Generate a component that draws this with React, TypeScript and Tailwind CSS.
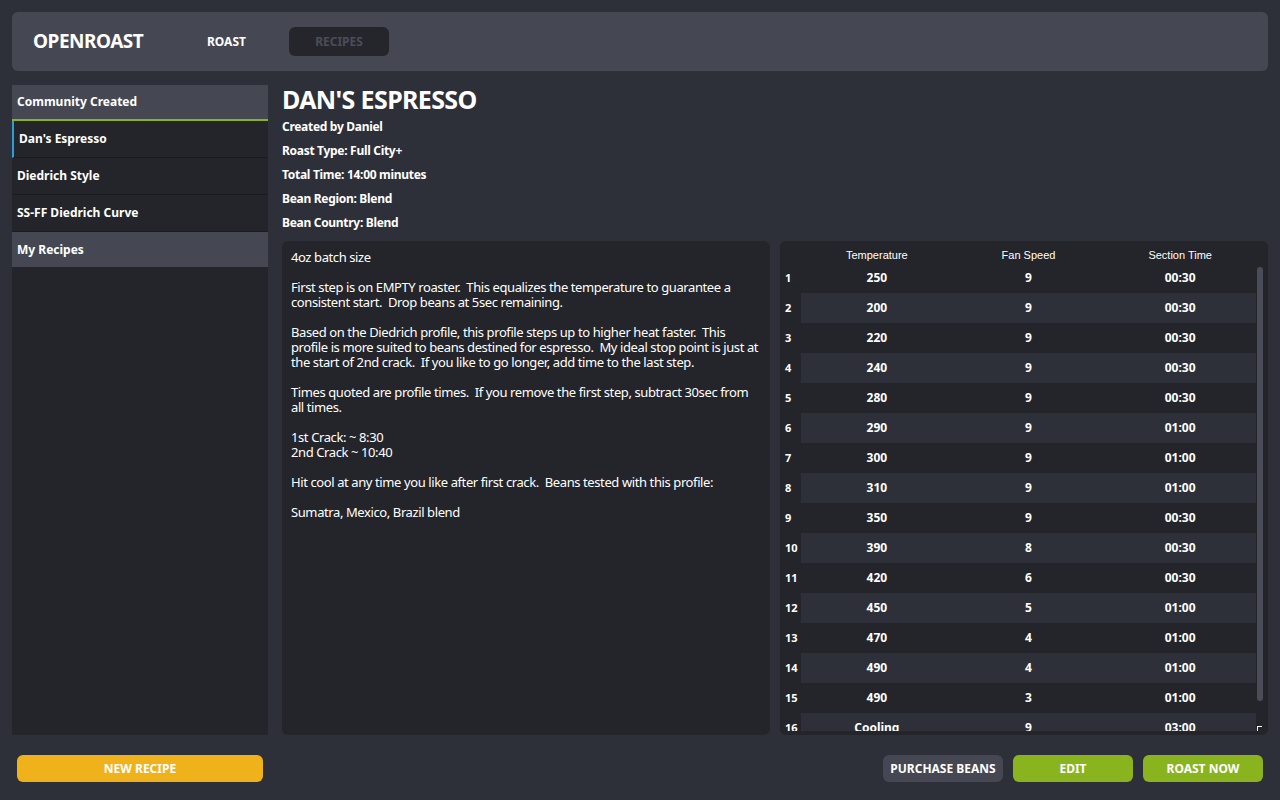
const steps = [
  { temp: '250', fan: '9', time: '00:30' },
  { temp: '200', fan: '9', time: '00:30' },
  { temp: '220', fan: '9', time: '00:30' },
  { temp: '240', fan: '9', time: '00:30' },
  { temp: '280', fan: '9', time: '00:30' },
  { temp: '290', fan: '9', time: '01:00' },
  { temp: '300', fan: '9', time: '01:00' },
  { temp: '310', fan: '9', time: '01:00' },
  { temp: '350', fan: '9', time: '00:30' },
  { temp: '390', fan: '8', time: '00:30' },
  { temp: '420', fan: '6', time: '00:30' },
  { temp: '450', fan: '5', time: '01:00' },
  { temp: '470', fan: '4', time: '01:00' },
  { temp: '490', fan: '4', time: '01:00' },
  { temp: '490', fan: '3', time: '01:00' },
  { temp: 'Cooling', fan: '9', time: '03:00' },
];

const description = `4oz batch size

First step is on EMPTY roaster.  This equalizes the temperature to guarantee a consistent start.  Drop beans at 5sec remaining.

Based on the Diedrich profile, this profile steps up to higher heat faster.  This profile is more suited to beans destined for espresso.  My ideal stop point is just at the start of 2nd crack.  If you like to go longer, add time to the last step.

Times quoted are profile times.  If you remove the first step, subtract 30sec from all times.

1st Crack: ~ 8:30
2nd Crack ~ 10:40

Hit cool at any time you like after first crack.  Beans tested with this profile:

Sumatra, Mexico, Brazil blend`;

const info = [
  'Created by Daniel',
  'Roast Type: Full City+',
  'Total Time: 14:00 minutes',
  'Bean Region: Blend',
  'Bean Country: Blend',
];

export default function App() {
  return (
    <div className="w-[1280px] h-[800px] bg-[#2e3039] p-3 flex flex-col text-white font-['Noto_Sans',sans-serif] overflow-hidden">
      {/* Top bar */}
      <header className="h-[59px] shrink-0 bg-[#454852] rounded-md flex items-center pl-[21px]">
        <div className="text-[19px] font-bold tracking-tight w-[174px]">OPENROAST</div>
        <div className="text-[12px] font-bold w-[82px]">ROAST</div>
        <div className="w-[100px] h-[29px] rounded-md bg-[#25262b] flex items-center justify-center text-[12px] font-bold text-[#4a4d58]">
          RECIPES
        </div>
      </header>

      <div className="flex mt-[14px] h-[650px] shrink-0">
        {/* Sidebar */}
        <aside className="w-[256px] shrink-0 bg-[#24252a] flex flex-col">
          <div className="h-[34px] bg-[#454852] flex items-center pl-[5px] text-[12px] font-bold">Community Created</div>
          <div className="h-[2px] bg-[#8ab41e]" />
          <div className="h-[37px] flex items-center border-l-2 border-[#2a9fd6] border-b border-b-[#1b1c20] pl-[5px] text-[12px] font-bold">Dan's Espresso</div>
          <div className="h-[37px] flex items-center border-b border-[#1b1c20] pl-[5px] text-[12px] font-bold">Diedrich Style</div>
          <div className="h-[37px] flex items-center border-b border-[#1b1c20] pl-[5px] text-[12px] font-bold">SS-FF Diedrich Curve</div>
          <div className="h-[35px] bg-[#454852] flex items-center pl-[5px] text-[12px] font-bold">My Recipes</div>
        </aside>

        {/* Main */}
        <main className="flex-1 flex flex-col ml-[14px]">
          <h1 className="text-[25px] font-bold leading-none tracking-tight mt-[2px] h-[27px]">DAN'S ESPRESSO</h1>
          <div className="flex flex-col mt-[1px]">
            {info.map((line) => (
              <div key={line} className="h-[24px] flex items-center text-[12px] font-bold tracking-tight">{line}</div>
            ))}
          </div>

          <div className="flex gap-[10px] mt-[6px] h-[494px]">
            <div className="w-[488px] bg-[#24252a] rounded-md px-[9px] py-[9px] text-[13px] leading-[15px] whitespace-pre-wrap tracking-[-0.4px]">
              {description}
            </div>

            <div className="w-[488px] bg-[#24252a] rounded-md flex flex-col overflow-hidden">
              <div className="h-[22px] flex items-end font-['Liberation_Sans',sans-serif] text-[11px] pr-[12px]">
                <div className="w-[21px]" />
                <div className="flex-1 text-center">Temperature</div>
                <div className="flex-1 text-center">Fan Speed</div>
                <div className="flex-1 text-center">Section Time</div>
              </div>
              <div className="flex h-[468px] overflow-hidden">
                <div className="flex-1 flex flex-col">
                  {steps.map((s, i) => (
                    <div key={i} className="h-[30px] shrink-0 flex items-center">
                      <div className="w-[21px] pl-[5px] text-[11px] font-bold">{i + 1}</div>
                      <div className={`flex-1 h-full flex items-center text-[12px] font-bold ${i % 2 === 1 ? 'bg-[#2e3039]' : ''}`}>
                        <div className="flex-1 text-center">{s.temp}</div>
                        <div className="flex-1 text-center">{s.fan}</div>
                        <div className="flex-1 text-center">{s.time}</div>
                      </div>
                    </div>
                  ))}
                </div>
                <div className="w-[12px] shrink-0 relative">
                  <div className="ml-[1px] mt-[4px] w-[6px] h-[434px] rounded-full bg-[#4a4d58]" />
                  <div className="absolute left-[1px] bottom-0 w-[5px] h-[5px] border-l border-t border-white" />
                </div>
              </div>
            </div>
          </div>
        </main>
      </div>

      {/* Bottom actions */}
      <div className="flex items-center justify-between px-[5px] mt-[20px]">
        <button className="w-[246px] h-[27px] rounded-md bg-[#f0b21a] text-[12px] font-bold">NEW RECIPE</button>
        <div className="flex gap-[10px]">
          <button className="w-[120px] h-[27px] rounded-md bg-[#454852] text-[12px] font-bold">PURCHASE BEANS</button>
          <button className="w-[120px] h-[27px] rounded-md bg-[#8ab41e] text-[12px] font-bold">EDIT</button>
          <button className="w-[120px] h-[27px] rounded-md bg-[#8ab41e] text-[12px] font-bold">ROAST NOW</button>
        </div>
      </div>
    </div>
  );
}
